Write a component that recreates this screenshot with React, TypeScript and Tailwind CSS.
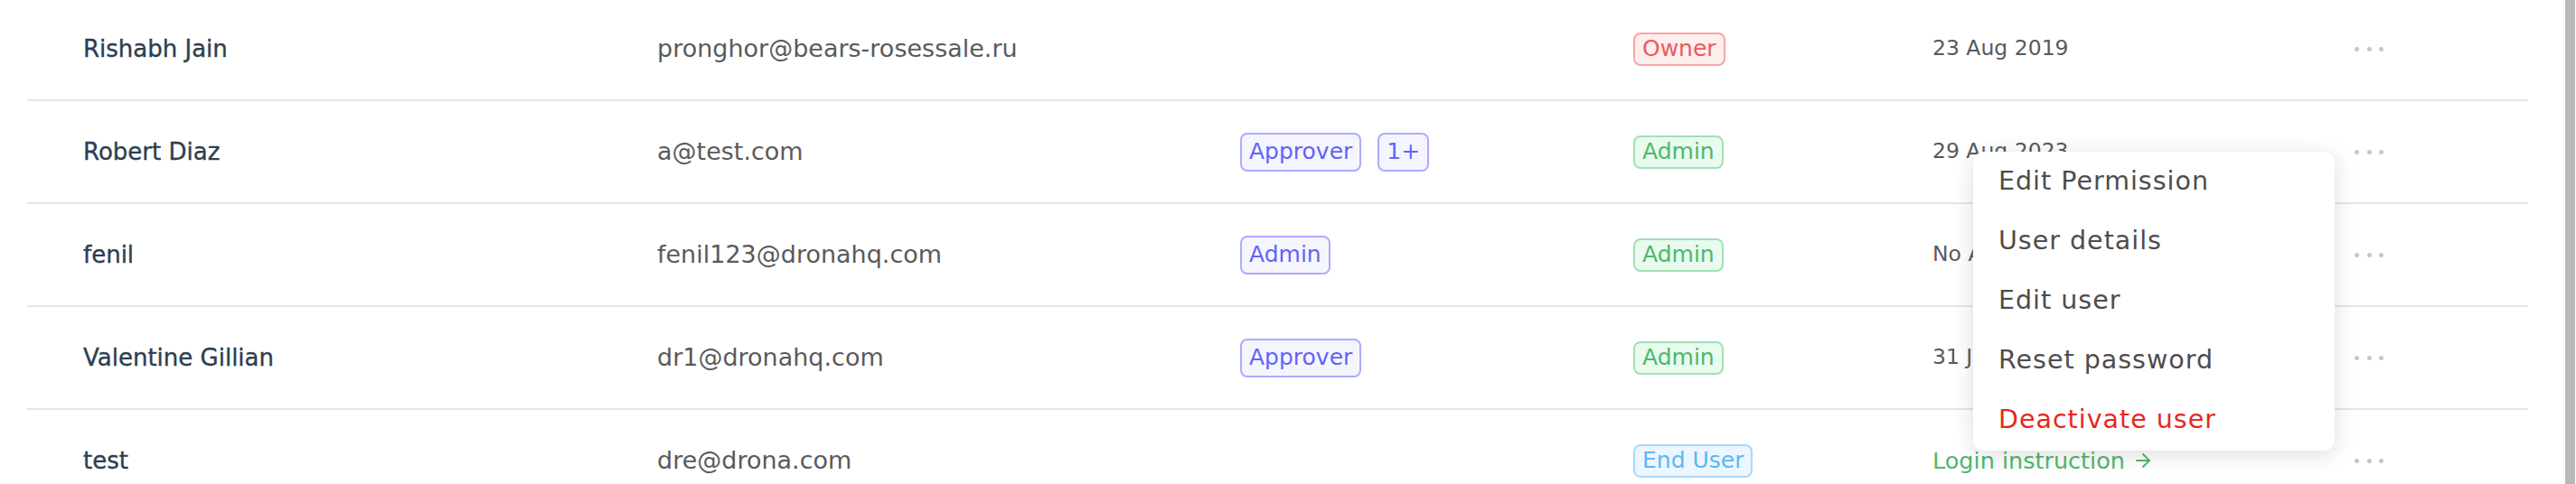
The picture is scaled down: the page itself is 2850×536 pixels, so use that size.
import React from "react";
import { ArrowRight } from "lucide-react";

type Row = {
  name: string;
  email: string;
  tags: string[];
  role: "Owner" | "Admin" | "End User";
  date?: string;
  login?: boolean;
};

const rows: Row[] = [
  { name: "Rishabh Jain", email: "pronghor@bears-rosessale.ru", tags: [], role: "Owner", date: "23 Aug 2019" },
  { name: "Robert Diaz", email: "a@test.com", tags: ["Approver", "1+"], role: "Admin", date: "29 Aug 2023" },
  { name: "fenil", email: "fenil123@dronahq.com", tags: ["Admin"], role: "Admin", date: "No Access" },
  { name: "Valentine Gillian", email: "dr1@dronahq.com", tags: ["Approver"], role: "Admin", date: "31 Jul 2023" },
  { name: "test", email: "dre@drona.com", tags: [], role: "End User", login: true },
];

const roleClass: Record<Row["role"], string> = {
  Owner: "border-[#f6a5a5] bg-[#fdeeee] text-[#ec5a5a]",
  Admin: "border-[#a2e0b4] bg-[#e9fbef] text-[#4cb86a]",
  "End User": "border-[#a9d9fb] bg-[#ebf6fe] text-[#5db7f3]",
};

function Dots() {
  return (
    <div className="flex items-center gap-[8.5px]">
      <span className="block w-[5px] h-[5px] rounded-full bg-[#c6c6c6]" />
      <span className="block w-[5px] h-[5px] rounded-full bg-[#c6c6c6]" />
      <span className="block w-[5px] h-[5px] rounded-full bg-[#c6c6c6]" />
    </div>
  );
}

export default function App() {
  return (
    <div className="relative flex w-[2850px] h-[536px] overflow-hidden bg-white font-['DejaVu_Sans',sans-serif]">
      <div className="flex-1 pl-[30px] pr-[41px]">
        <div className="-mt-[2px]">
          {rows.map((r) => (
            <div
              key={r.name}
              className="grid grid-cols-[635px_645px_435px_331px_467px_1fr] items-center h-[114px] border-b-2 border-[#e6e6e6] pl-[62px]"
            >
              <div className="text-[26px] text-[#2c3e50] [-webkit-text-stroke:0.35px_#2c3e50]">{r.name}</div>
              <div className="text-[27px] text-[#5a5a5a]">{r.email}</div>
              <div className="flex items-center gap-[18px]">
                {r.tags.map((t) => (
                  <span
                    key={t}
                    className="flex items-center h-[43px] px-[8px] rounded-[8px] border-2 border-[#abadfc] bg-[#f5f5ff] text-[25px] text-[#6363f4]"
                  >
                    {t}
                  </span>
                ))}
              </div>
              <div className="flex">
                <span
                  className={
                    "flex items-center h-[37px] px-[8px] rounded-[8px] border-2 text-[25px] " + roleClass[r.role]
                  }
                >
                  {r.role}
                </span>
              </div>
              <div>
                {r.login ? (
                  <span className="flex items-center gap-[8px] text-[25.5px] text-[#4fb86b]">
                    Login instruction
                    <ArrowRight size={24} strokeWidth={1.8} />
                  </span>
                ) : (
                  <span className="text-[23.5px] text-[#5a5a5a]">{r.date}</span>
                )}
              </div>
              <div>
                <Dots />
              </div>
            </div>
          ))}
        </div>
      </div>
      <div className="w-[12px] h-full pr-[1px]">
        <div className="w-[11px] h-full bg-[#b9b9b9]" />
      </div>

      <div className="absolute left-[2183px] top-[168px] w-[400px] h-[331px] rounded-[12px] bg-white shadow-[0_4px_24px_rgba(0,0,0,0.14)] flex flex-col">
        {["Edit Permission", "User details", "Edit user", "Reset password"].map((m) => (
          <div key={m} className="flex items-center h-[66px] pl-[28px] text-[28.5px] tracking-[1px] text-[#4d4d4d]">
            {m}
          </div>
        ))}
        <div className="flex items-center h-[66px] pl-[28px] text-[28.5px] tracking-[1px] text-[#e8271d]">
          Deactivate user
        </div>
      </div>
    </div>
  );
}
